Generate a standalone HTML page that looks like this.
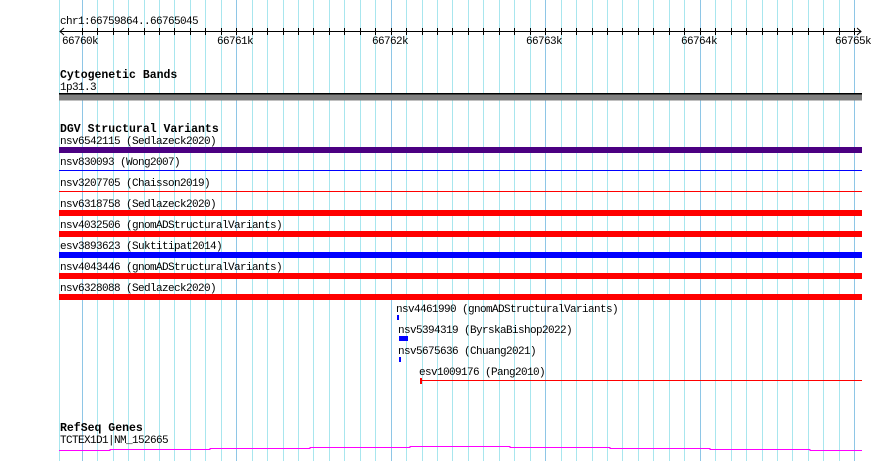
<!DOCTYPE html>
<html><head><style>
html,body{margin:0;padding:0;background:#fff;width:890px;height:461px;overflow:hidden}
text{font-family:"Liberation Mono",monospace;font-size:11px;letter-spacing:-0.6px;fill:#000}
.b{font-weight:bold;font-size:11.5px;letter-spacing:0}
</style></head><body>
<svg id="s" width="890" height="461" xmlns="http://www.w3.org/2000/svg">
<g id="grid"></g>
<g id="ticks" stroke="#000" stroke-width="1"></g>
<line x1="60" y1="31.5" x2="861" y2="31.5" stroke="#000"/>
<polyline points="64,28 60,31.5 64,35" fill="none" stroke="#000"/>
<polyline points="857,28 861,31.5 857,35" fill="none" stroke="#000"/>
<text x="60" y="24">chr1:66759864..66765045</text>
<text x="62" y="44">66760k</text>
<text x="217" y="44">66761k</text>
<text x="372" y="44">66762k</text>
<text x="526" y="44">66763k</text>
<text x="681" y="44">66764k</text>
<text x="835" y="44">66765k</text>

<text class="b" x="60" y="78">Cytogenetic Bands</text>
<text x="60" y="90">1p31.3</text>
<rect x="59" y="93" width="803" height="1.5" fill="#000"/>
<rect x="59" y="94.5" width="803" height="6" fill="#808080"/>

<text class="b" x="60" y="132">DGV Structural Variants</text>
<text x="60" y="144">nsv6542115 (Sedlazeck2020)</text>
<rect x="59" y="147" width="803" height="6" fill="#4b0082"/>
<text x="60" y="165">nsv830093 (Wong2007)</text>
<rect x="59" y="170" width="803" height="1" fill="#0000ff"/>
<text x="60" y="186">nsv3207705 (Chaisson2019)</text>
<rect x="59" y="191" width="803" height="1" fill="#ff0000"/>
<text x="60" y="207">nsv6318758 (Sedlazeck2020)</text>
<rect x="59" y="210" width="803" height="6" fill="#ff0000"/>
<text x="60" y="228">nsv4032506 (gnomADStructuralVariants)</text>
<rect x="59" y="231" width="803" height="6" fill="#ff0000"/>
<text x="60" y="249">esv3893623 (Suktitipat2014)</text>
<rect x="59" y="252" width="803" height="6" fill="#0000ff"/>
<text x="60" y="270">nsv4043446 (gnomADStructuralVariants)</text>
<rect x="59" y="273" width="803" height="6" fill="#ff0000"/>
<text x="60" y="291">nsv6328088 (Sedlazeck2020)</text>
<rect x="59" y="294" width="803" height="6" fill="#ff0000"/>

<text x="396" y="312">nsv4461990 (gnomADStructuralVariants)</text>
<rect x="397" y="315" width="2" height="5" fill="#0000ff"/>
<text x="398" y="333">nsv5394319 (ByrskaBishop2022)</text>
<rect x="399" y="336" width="9" height="5" fill="#0000ff"/>
<text x="398" y="354">nsv5675636 (Chuang2021)</text>
<rect x="399" y="357" width="2" height="5" fill="#0000ff"/>
<text x="419" y="375">esv1009176 (Pang2010)</text>
<rect x="420" y="378" width="2" height="6" fill="#ff0000"/>
<rect x="421" y="380" width="441" height="1" fill="#ff0000"/>

<text class="b" x="60" y="431">RefSeq Genes</text>
<text x="60" y="443">TCTEX1D1|NM_152665</text>
<polyline fill="none" stroke="#ff00ff" stroke-width="1" points="59,450.5 110,450.5 110,449.5 210,449.5 210,448.5 310,448.5 310,447.5 410,447.5 410,446.5 510,446.5 510,447.5 610,447.5 610,448.5 710,448.5 710,449.5 810,449.5 810,450.5 862,450.5"/>
</svg>
<script>
var g=document.getElementById('grid'),t=document.getElementById('ticks'),ns='http://www.w3.org/2000/svg';
function L(p,x,y1,y2,c){var l=document.createElementNS(ns,'line');l.setAttribute('x1',x);l.setAttribute('x2',x);l.setAttribute('y1',y1);l.setAttribute('y2',y2);if(c)l.setAttribute('stroke',c);p.appendChild(l);}
L(g,59.5,0,461,'#a8e6ee');
for(var k=0;k<=50;k++){var x=Math.round(81.7+k*15.45)+0.5;var maj=(k%10==0);L(g,x,0,461,maj?'#8ec6e6':'#a8e6ee');L(t,x,28,35);}
</script>
</body></html>
